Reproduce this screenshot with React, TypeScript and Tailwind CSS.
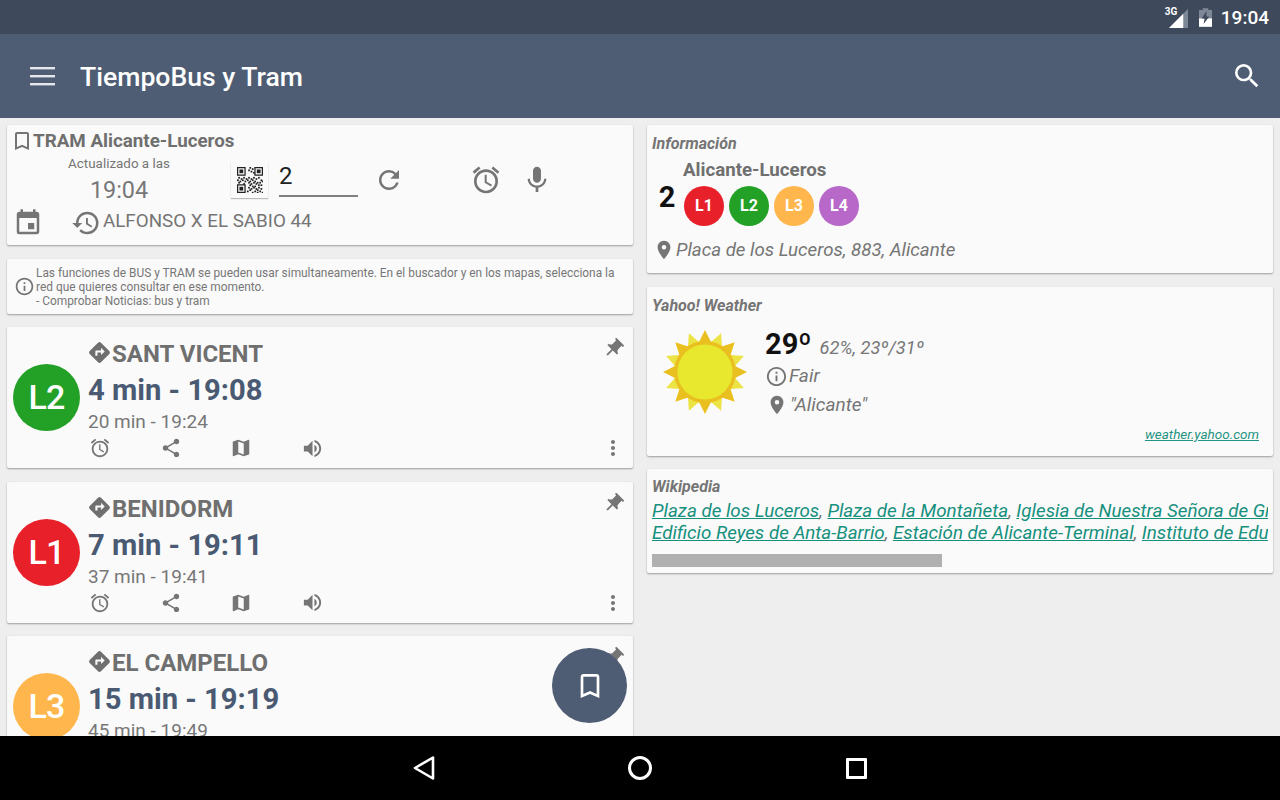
import type { ReactNode } from 'react'
import {
  MdAccessAlarm,
  MdBookmarkBorder,
  MdDirections,
  MdEvent,
  MdHistory,
  MdInfoOutline,
  MdMap,
  MdMic,
  MdMoreVert,
  MdPlace,
  MdPushPin,
  MdRefresh,
  MdSearch,
  MdShare,
  MdVolumeUp,
} from 'react-icons/md'

const arrivals = [
  { line: 'L2', color: 'bg-[#23a127]', dest: 'SANT VICENT', next: '4 min - 19:08', after: '20 min - 19:24' },
  { line: 'L1', color: 'bg-[#e8202a]', dest: 'BENIDORM', next: '7 min - 19:11', after: '37 min - 19:41' },
  { line: 'L3', color: 'bg-[#ffb74d]', dest: 'EL CAMPELLO', next: '15 min - 19:19', after: '45 min - 19:49' },
]

const lines = [
  { line: 'L1', color: 'bg-[#e8202a]' },
  { line: 'L2', color: 'bg-[#23a127]' },
  { line: 'L3', color: 'bg-[#ffb74d]' },
  { line: 'L4', color: 'bg-[#b768c8]' },
]

function Card({ className, children }: { className: string; children: ReactNode }) {
  return (
    <div className={`bg-[#fafafa] rounded-[2px] shadow-[0_1px_2px_rgba(0,0,0,0.35)] ${className}`}>{children}</div>
  )
}

function QrCode() {
  const cells = [
    [10, 0], [12, 1], [9, 2], [11, 3], [13, 4], [1, 8], [3, 9], [5, 8], [7, 9], [9, 8], [11, 9], [13, 8], [15, 9], [17, 8], [19, 10],
    [0, 10], [2, 11], [4, 10], [6, 11], [8, 10], [10, 11], [12, 10], [14, 11], [16, 12], [18, 12], [20, 11], [1, 12], [5, 13], [9, 12], [11, 13], [13, 12],
    [15, 13], [17, 14], [19, 14], [10, 14], [12, 15], [14, 15], [9, 16], [11, 17], [13, 16], [15, 17], [17, 16], [19, 17], [10, 18], [14, 19], [16, 18], [18, 19], [20, 20], [12, 20], [8, 19], [16, 20],
  ]
  return (
    <svg viewBox="0 0 21 21" className="w-[26px] h-[26px]" fill="#222">
      {[[0, 0], [14, 0], [0, 14]].map(([x, y]) => (
        <g key={`${x}-${y}`}>
          <path d={`M${x} ${y}h7v7h-7z M${x + 1} ${y + 1}v5h5v-5z`} fillRule="evenodd" />
          <rect x={x + 2} y={y + 2} width="3" height="3" />
        </g>
      ))}
      {cells.map(([x, y]) => (
        <rect key={`${x}-${y}`} x={x} y={y} width="1.4" height="1.4" />
      ))}
    </svg>
  )
}

function Sun() {
  const rays = Array.from({ length: 16 }, (_, i) => (i * 360) / 16)
  return (
    <svg viewBox="0 0 84 84" className="w-[84px] h-[84px]">
      {rays.map((deg, i) => (
        <polygon
          key={deg}
          points="35,14 42,0 49,14"
          fill={i % 2 === 0 ? '#e9c01f' : '#ece444'}
          transform={`rotate(${deg} 42 42)`}
        />
      ))}
      <circle cx="42" cy="42" r="31" fill="#e9c01f" />
      <circle cx="42" cy="42" r="27.5" fill="#e8e92f" />
    </svg>
  )
}

function ArrivalCard({ line, color, dest, next, after }: (typeof arrivals)[number]) {
  return (
    <Card className="h-[141px] shrink-0 flex items-start pl-[6px] pr-[8px]">
      <div
        className={`${color} w-[67px] h-[67px] mt-[37px] shrink-0 rounded-full flex items-center justify-center text-white text-[34px] font-medium tracking-tight`}
      >
        {line}
      </div>
      <div className="ml-[8px] flex-1 min-w-0 pt-[12px]">
        <div className="flex items-center h-[30px] text-[#6f6f6f]">
          <MdDirections className="w-[25px] h-[25px] -mt-[3px] -ml-[1px]" />
          <span className="text-[24px] font-bold leading-none">{dest}</span>
        </div>
        <div className="text-[29.2px] font-bold text-[#4a5a72] leading-[36px] mt-[3px]">{next}</div>
        <div className="text-[19px] text-[#777] leading-[24px] mt-[2px]">{after}</div>
        <div className="flex items-center text-[#757575] mt-px h-[26px]">
          <div className="w-[71px] flex pl-px"><MdAccessAlarm className="w-[22px] h-[22px]" /></div>
          <div className="w-[71px] flex pl-px"><MdShare className="w-[22px] h-[22px]" /></div>
          <div className="w-[71px] flex"><MdMap className="w-[22px] h-[22px]" /></div>
          <MdVolumeUp className="w-[23px] h-[23px]" />
          <MdMoreVert className="w-[24px] h-[24px] ml-auto -mr-[2px]" />
        </div>
      </div>
      <MdPushPin className="w-[23px] h-[23px] text-[#757575] rotate-45 mt-[10px] -ml-[21px]" />
    </Card>
  )
}

export default function App() {
  return (
    <div className="w-[1280px] h-[800px] relative overflow-hidden flex flex-col bg-black font-['Roboto',sans-serif]">
      {/* Status bar */}
      <div className="h-[34px] shrink-0 bg-[#3e4a5b] flex items-center justify-end pr-[11px] text-white">
        <div className="relative w-[23px] h-[24px] mr-[11px]">
          <span className="absolute left-0 top-0 text-[10px] font-bold leading-[14px]">3G</span>
          <svg viewBox="0 0 20 20" className="absolute right-0 bottom-[1px] w-[19px] h-[19px]">
            <polygon points="20,0 20,20 0,20" fill="#7d8796" />
            <polygon points="15,5 15,20 0,20" fill="#fff" />
          </svg>
        </div>
        <svg viewBox="0 0 14 20" className="w-[13px] h-[19px] mr-[9px]">
          <path d="M4 0h6v2h4v18H0V2h4z" fill="#7d8796" />
          <path d="M0 11h14v9H0z" fill="#fff" />
          <path d="M8 3 3 11h3l-1 6 6-8H8z" fill="#3e4a5b" />
        </svg>
        <span className="text-[19px] font-medium leading-none">19:04</span>
      </div>

      {/* App bar */}
      <div className="h-[84px] shrink-0 bg-[#4e5d73] flex items-center text-white pl-[30px] pr-[17px]">
        <svg viewBox="0 0 25 20" className="w-[25px] h-[20px]" fill="#e4e7eb">
          <rect y="1" width="25" height="2.4" />
          <rect y="9" width="25" height="2.4" />
          <rect y="17" width="25" height="2.4" />
        </svg>
        <span className="ml-[25px] text-[26.6px] font-medium mt-[2px]">TiempoBus y Tram</span>
        <MdSearch className="w-[32px] h-[32px] ml-auto" />
      </div>

      {/* Content */}
      <div className="flex-1 min-h-0 bg-[#eeeeee] flex px-[7px] pt-[7px] gap-[14px] overflow-hidden">
        <div className="w-[626px] shrink-0 flex flex-col">
          <Card className="h-[120px] shrink-0 px-[7px] pt-[4px] text-[#757575]">
            <div className="flex items-center h-[24px]">
              <MdBookmarkBorder className="w-[24px] h-[24px] -ml-[4px] -mr-px" />
              <span className="text-[18.8px] font-bold text-[#6f6f6f] leading-none">TRAM Alicante-Luceros</span>
            </div>
            <div className="flex items-start h-[53px] mt-px">
              <div className="w-[210px] shrink-0 flex flex-col items-center">
                <span className="text-[13.4px] leading-[18px] mt-px">Actualizado a las</span>
                <span className="text-[23.4px] leading-[30px] mt-[2px] text-[#777]">19:04</span>
              </div>
              <div className="w-[37px] h-[36px] mt-[8px] ml-[7px] shrink-0 flex items-center justify-center bg-[#fafafa] shadow-[0_1px_1px_rgba(0,0,0,0.25)]">
                <QrCode />
              </div>
              <div className="w-[79px] h-[35px] mt-[8px] ml-[11px] border-b-2 border-[#808080] text-[24px] text-[#222] leading-[28px]">
                <span>2</span>
              </div>
              <MdRefresh className="w-[30px] h-[30px] mt-[11px] ml-[16px]" />
              <MdAccessAlarm className="w-[32px] h-[32px] mt-[10px] ml-[66px]" />
              <MdMic className="w-[32px] h-[32px] mt-[10px] ml-[19px]" />
            </div>
            <div className="flex items-center h-[32px]">
              <MdEvent className="w-[30px] h-[30px] -ml-px" />
              <MdHistory className="w-[30px] h-[30px] ml-[28px]" />
              <span className="text-[18.8px] leading-none -mt-[3px] ml-[2px]">ALFONSO X EL SABIO 44</span>
            </div>
          </Card>

          <Card className="h-[55px] shrink-0 mt-[14px] flex items-center pl-[7px] pr-[8px]">
            <MdInfoOutline className="w-[21px] h-[21px] shrink-0 text-[#757575]" />
            <div className="text-[11.9px] leading-[14px] text-[#777] ml-px whitespace-nowrap">
              <div>Las funciones de BUS y TRAM se pueden usar simultaneamente. En el buscador y en los mapas, selecciona la</div>
              <div>red que quieres consultar en ese momento.</div>
              <div>- Comprobar Noticias: bus y tram</div>
            </div>
          </Card>

          <div className="mt-[13px] flex flex-col gap-[13.5px]">
            {arrivals.map((a) => (
              <ArrivalCard key={a.line} {...a} />
            ))}
          </div>
        </div>

        <div className="w-[626px] shrink-0 flex flex-col">
          <Card className="h-[148px] shrink-0 pl-[5px] pt-[9px]">
            <div className="text-[16px] font-bold italic text-[#757575] leading-[20px]">Información</div>
            <div className="flex items-start mt-[4px]">
              <span className="w-[30px] text-center mt-[24px] text-[29px] font-bold text-[#111] leading-[30px]">2</span>
              <div className="ml-px">
                <div className="text-[18.7px] font-bold text-[#6f6f6f] leading-[24px]">Alicante-Luceros</div>
                <div className="flex gap-[5px] mt-[4px] ml-px">
                  {lines.map((l) => (
                    <div
                      key={l.line}
                      className={`${l.color} w-[40px] h-[40px] rounded-full flex items-center justify-center text-white text-[16px] font-bold`}
                    >
                      {l.line}
                    </div>
                  ))}
                </div>
              </div>
            </div>
            <div className="flex items-center mt-[11px] text-[#757575]">
              <MdPlace className="w-[22px] h-[22px] shrink-0 ml-px" />
              <span className="text-[18.7px] italic leading-[26px] ml-px">Placa de los Luceros, 883, Alicante</span>
            </div>
          </Card>

          <Card className="h-[169px] shrink-0 mt-[14px] pl-[5px] pr-[14px] pt-[9px]">
            <div className="text-[16px] font-bold italic text-[#757575] leading-[20px]">Yahoo! Weather</div>
            <div className="flex mt-[8px]">
              <div className="ml-[11px] mt-[6px] shrink-0"><Sun /></div>
              <div className="ml-[18px] mt-[2px]">
                <div className="flex items-baseline">
                  <span className="text-[29px] font-bold text-[#111] leading-[36px]">29º</span>
                  <span className="text-[18.3px] italic text-[#777] ml-[8px]">62%, 23º/31º</span>
                </div>
                <div className="flex items-center h-[28px] text-[#757575]">
                  <MdInfoOutline className="w-[23px] h-[23px]" />
                  <span className="text-[19px] italic ml-px">Fair</span>
                </div>
                <div className="flex items-center h-[28px] text-[#757575] mt-px">
                  <MdPlace className="w-[22px] h-[22px] ml-px" />
                  <span className="text-[19px] italic ml-[2px]">"Alicante"</span>
                </div>
              </div>
            </div>
            <div className="text-right text-[13.5px] italic underline text-[#1f9484] mt-[5px]">weather.yahoo.com</div>
          </Card>

          <Card className="h-[104px] shrink-0 mt-[13px] pl-[5px] pr-[5px] pt-[8px]">
            <div className="text-[16px] font-bold italic text-[#757575] leading-[20px]">Wikipedia</div>
            <div className="overflow-hidden text-[18.8px] italic leading-[22px] text-[#757575] whitespace-nowrap mt-[3px]">
              <div>
                <span className="underline text-[#16907e]">Plaza de los Luceros</span>,{' '}
                <span className="underline text-[#16907e]">Plaza de la Montañeta</span>,{' '}
                <span className="underline text-[#16907e]">Iglesia de Nuestra Señora de Gracia</span>
              </div>
              <div>
                <span className="underline text-[#16907e]">Edificio Reyes de Anta-Barrio</span>,{' '}
                <span className="underline text-[#16907e]">Estación de Alicante-Terminal</span>,{' '}
                <span className="underline text-[#16907e]">Instituto de Educación</span>
              </div>
            </div>
            <div className="w-[290px] h-[13px] bg-[#b0b0b0] mt-[10px]" />
          </Card>
        </div>
      </div>

      {/* Nav bar */}
      <div className="h-[64px] shrink-0 bg-black flex items-center justify-center pr-[2px]">
        <svg viewBox="0 0 24 26" className="w-[24px] h-[26px]" fill="none" stroke="#fff" strokeWidth="2.6" strokeLinejoin="round">
          <path d="M21 2.5v21L3 13z" />
        </svg>
        <div className="w-[24px] h-[24px] ml-[192px] rounded-full border-[3px] border-white" />
        <div className="w-[21px] h-[21px] ml-[194px] border-[3px] border-white rounded-[1px]" />
      </div>

      {/* FAB */}
      <div className="absolute left-[552px] top-[648px] w-[75px] h-[75px] rounded-full bg-[#4e5d73] flex items-center justify-center text-white">
        <MdBookmarkBorder className="w-[32px] h-[32px]" />
      </div>
    </div>
  )
}
